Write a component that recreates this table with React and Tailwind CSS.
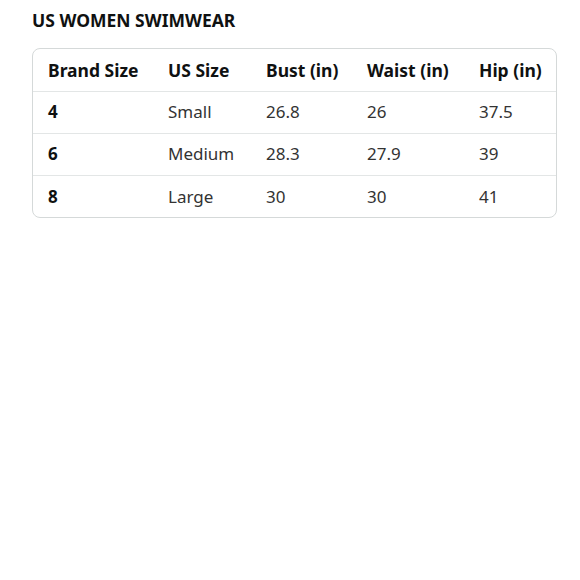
import React from 'react';

const rows = [
  ['4', 'Small', '26.8', '26', '37.5'],
  ['6', 'Medium', '28.3', '27.9', '39'],
  ['8', 'Large', '30', '30', '41'],
];

const headers = ['Brand Size', 'US Size', 'Bust (in)', 'Waist (in)', 'Hip (in)'];

export default function App() {
  return (
    <div className="min-h-[580px] bg-white pl-8 pr-[23px] pt-[8px] font-['Noto_Sans',sans-serif] text-[#0f1111]">
      <h2 className="text-[17.5px] font-bold leading-6">US WOMEN SWIMWEAR</h2>
      <div className="mt-[16px] overflow-hidden rounded-lg border border-[#d5d9d9]">
        <table className="w-full border-collapse text-left text-[17px]">
          <colgroup>
            <col className="w-[120px]" />
            <col className="w-[98px]" />
            <col className="w-[101px]" />
            <col className="w-[112px]" />
            <col />
          </colgroup>
          <thead>
            <tr className="h-[42px] border-b border-[#e3e6e6]">
              {headers.map((h) => (
                <th key={h} className="pl-[15px] text-[17.5px] font-bold">
                  {h}
                </th>
              ))}
            </tr>
          </thead>
          <tbody>
            {rows.map((r, i) => (
              <tr key={r[0]} className={`h-[42px] ${i < rows.length - 1 ? 'border-b border-[#e3e6e6]' : ''}`}>
                {r.map((c, j) => (
                  <td key={j} className={`pl-[15px] ${j === 0 ? 'font-bold' : 'text-[#333]'}`}>
                    {c}
                  </td>
                ))}
              </tr>
            ))}
          </tbody>
        </table>
      </div>
    </div>
  );
}
